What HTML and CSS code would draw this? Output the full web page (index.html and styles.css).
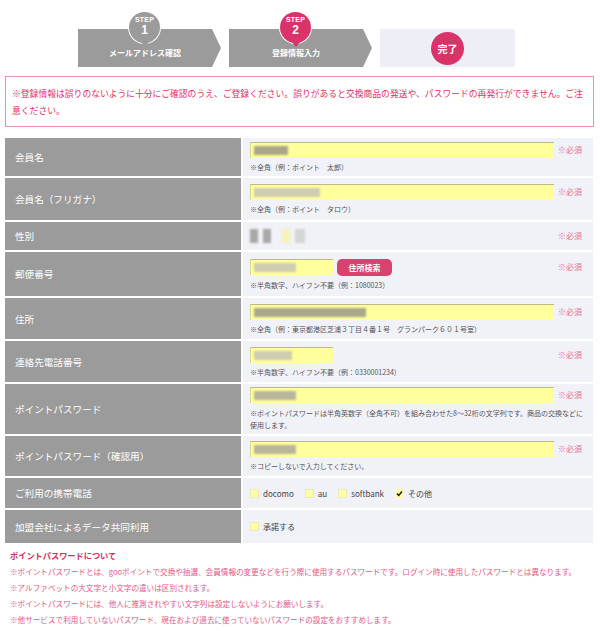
FILE: index.html
```html
<!DOCTYPE html>
<html lang="ja">
<head>
<meta charset="utf-8">
<title>登録情報入力</title>
<link rel="stylesheet" href="styles.css">
</head>
<body>
<div class="page">
  <div class="steps">
    <div class="step">
      <div class="bar">
        <div class="badge"><span class="b-step">STEP</span><span class="b-num">1</span></div>
        <span class="step-label">メールアドレス確認</span>
      </div>
      <div class="tip"></div>
    </div>
    <div class="step">
      <div class="bar">
        <div class="badge badge-pink"><span class="b-step">STEP</span><span class="b-num">2</span></div>
        <span class="step-label">登録情報入力</span>
      </div>
      <div class="tip"></div>
    </div>
    <div class="step-final">
      <span class="done-badge">完了</span>
    </div>
  </div>

  <div class="notice">※登録情報は誤りのないように十分にご確認のうえ、ご登録ください。誤りがあると交換商品の発送や、パスワードの再発行ができません。ご注意ください。</div>

  <div class="form">
    <div class="row h38">
      <div class="th">会員名</div>
      <div class="td">
        <div class="line"><div class="field wide"><span class="blur bl-dark w34"></span></div><span class="req">※必須</span></div>
        <p class="hint">※全角（例：ポイント　太郎）</p>
      </div>
    </div>
    <div class="row h42">
      <div class="th">会員名（フリガナ）</div>
      <div class="td">
        <div class="line"><div class="field wide"><span class="blur bl-light w66"></span></div><span class="req">※必須</span></div>
        <p class="hint">※全角（例：ポイント　タロウ）</p>
      </div>
    </div>
    <div class="row h28">
      <div class="th">性別</div>
      <div class="td">
        <div class="line">
          <div class="blobs"><span class="sq sq-grey"></span><span class="sq sq-grey"></span><span class="sq sq-yellow"></span><span class="sq sq-light"></span></div>
          <span class="req">※必須</span>
        </div>
      </div>
    </div>
    <div class="row h44">
      <div class="th">郵便番号</div>
      <div class="td">
        <div class="line"><div class="field short"><span class="blur bl-light w42"></span></div><span class="btn">住所検索</span><span class="req">※必須</span></div>
        <p class="hint">※半角数字、ハイフン不要（例：1080023）</p>
      </div>
    </div>
    <div class="row h41">
      <div class="th">住所</div>
      <div class="td">
        <div class="line"><div class="field wide"><span class="blur bl-dark w112"></span></div><span class="req">※必須</span></div>
        <p class="hint">※全角（例：東京都港区芝浦３丁目４番１号　グランパーク６０１号室）</p>
      </div>
    </div>
    <div class="row h41">
      <div class="th">連絡先電話番号</div>
      <div class="td">
        <div class="line"><div class="field short"><span class="blur bl-light w38"></span></div><span class="req">※必須</span></div>
        <p class="hint">※半角数字、ハイフン不要（例：0330001234）</p>
      </div>
    </div>
    <div class="row h50">
      <div class="th">ポイントパスワード</div>
      <div class="td">
        <div class="line"><div class="field wide"><span class="blur bl-mid w42"></span></div><span class="req">※必須</span></div>
        <p class="hint hint-wrap">※ポイントパスワードは半角英数字（全角不可）を組み合わせた8～32桁の文字列です。商品の交換などに使用します。</p>
      </div>
    </div>
    <div class="row h40">
      <div class="th">ポイントパスワード（確認用）</div>
      <div class="td">
        <div class="line"><div class="field wide"><span class="blur bl-mid w42"></span></div><span class="req">※必須</span></div>
        <p class="hint">※コピーしないで入力してください。</p>
      </div>
    </div>
    <div class="row h30">
      <div class="th">ご利用の携帯電話</div>
      <div class="td">
        <div class="checks">
          <span class="opt"><span class="cb"></span>docomo</span>
          <span class="opt"><span class="cb"></span>au</span>
          <span class="opt"><span class="cb"></span>softbank</span>
          <span class="opt"><span class="cb cb-on"><svg viewBox="0 0 9 9" width="9" height="9"><polyline points="2,4.6 3.8,6.4 7,2.6" fill="none" stroke="#222" stroke-width="1.6"/></svg></span>その他</span>
        </div>
      </div>
    </div>
    <div class="row h33">
      <div class="th">加盟会社によるデータ共同利用</div>
      <div class="td">
        <div class="checks">
          <span class="opt"><span class="cb"></span>承諾する</span>
        </div>
      </div>
    </div>
  </div>

  <div class="about">
    <h2 class="about-title">ポイントパスワードについて</h2>
    <p>※ポイントパスワードとは、gooポイントで交換や抽選、会員情報の変更などを行う際に使用するパスワードです。ログイン時に使用したパスワードとは異なります。</p>
    <p>※アルファベットの大文字と小文字の違いは区別されます。</p>
    <p>※ポイントパスワードには、他人に推測されやすい文字列は設定しないようにお願いします。</p>
    <p>※他サービスで利用していないパスワード、現在および過去に使っていないパスワードの設定をおすすめします。</p>
  </div>
</div>
</body>
</html>
```

FILE: styles.css
```css
* { box-sizing: border-box; }
html, body { margin: 0; padding: 0; background: #fff; }
body {
  font-family: "Noto Sans CJK JP", "Noto Sans", sans-serif;
  color: #333;
}
.page {
  width: 600px;
  padding: 0 6px 0 5px;
}

/* steps */
.steps {
  display: flex;
  gap: 8px;
  padding: 29px 0 0 73px;
}
.step { display: flex; }
.bar {
  position: relative;
  width: 134px;
  height: 38px;
  background: #9b9b9b;
  display: flex;
  align-items: flex-end;
  justify-content: center;
  padding-bottom: 9px;
}
.tip {
  width: 0;
  height: 0;
  border-left: 9px solid #9b9b9b;
  border-top: 19px solid transparent;
  border-bottom: 19px solid transparent;
}
.step-label {
  color: #fff;
  font-size: 8px;
  font-weight: bold;
  line-height: 10px;
  white-space: nowrap;
}
.badge {
  position: absolute;
  top: -17px;
  left: 51px;
  width: 31px;
  height: 31px;
  border-radius: 50%;
  background: #9b9b9b;
  box-shadow: 0 0 0 1px #fff;
  display: flex;
  flex-direction: column;
  align-items: center;
  padding-top: 4px;
  color: #fff;
  font-family: "Liberation Sans", "DejaVu Sans", sans-serif;
  font-weight: bold;
}
.badge::after {
  content: "";
  position: absolute;
  left: 50%;
  bottom: -4px;
  margin-left: -4px;
  border-left: 4px solid transparent;
  border-right: 4px solid transparent;
  border-top: 5px solid #9b9b9b;
}
.badge-pink { background: #d9336a; }
.badge-pink::after { border-top-color: #d9336a; }
.b-step { font-size: 7px; line-height: 8px; letter-spacing: 0.2px; }
.b-num { font-size: 12px; line-height: 12px; }
.step-final {
  width: 135px;
  height: 38px;
  background: #eeeef7;
  display: flex;
  align-items: center;
  justify-content: center;
}
.done-badge {
  width: 33px;
  height: 33px;
  border-radius: 50%;
  background: #d9336a;
  color: #fff;
  font-size: 10px;
  font-weight: bold;
  display: flex;
  align-items: center;
  justify-content: center;
}

/* notice */
.notice {
  margin-top: 9px;
  border: 1px solid #e892aa;
  padding: 8px 6px 7px;
  font-size: 8.8px;
  line-height: 17px;
  color: #e0306a;
}

/* form */
.form {
  margin-top: 11px;
  width: 588px;
}
.row {
  display: flex;
  margin-bottom: 2px;
}
.h38 { height: 38px; }
.h42 { height: 42px; }
.h28 { height: 28px; }
.h44 { height: 44px; }
.h41 { height: 41px; }
.h50 { height: 50px; }
.h40 { height: 40px; }
.h30 { height: 30px; }
.h33 { height: 33px; }
.th {
  width: 236px;
  flex: none;
  background: #9b9b9b;
  color: #fff;
  font-size: 9.6px;
  padding-left: 10px;
  display: flex;
  align-items: center;
}
.td {
  flex: 1;
  margin-left: 2px;
  background: #f1f1f8;
  padding: 0 5px 0 7px;
  display: flex;
  flex-direction: column;
  justify-content: center;
}
.line {
  display: flex;
  align-items: center;
}
.field {
  height: 16px;
  background: #ffff9c;
  border-top: 1px solid #b9b98a;
  border-left: 1px solid #d8d890;
  display: flex;
  align-items: center;
  padding-left: 3px;
}
.wide { width: 304px; }
.short { width: 83px; }
.blur {
  display: block;
  height: 9px;
  filter: blur(1.2px);
}
.bl-dark { background: #a9a68a; }
.bl-mid { background: #b8b59a; }
.bl-light { background: #cfccb0; }
.w34 { width: 34px; }
.w38 { width: 38px; }
.w42 { width: 42px; }
.w66 { width: 66px; }
.w112 { width: 112px; }
.blobs {
  display: flex;
  gap: 5px;
  height: 15px;
  align-items: center;
}
.sq {
  display: block;
  width: 8px;
  height: 14px;
  filter: blur(1px);
}
.sq-grey { background: #a8a8a8; }
.sq-yellow { background: #f3f3b8; margin-left: 6px; }
.sq-light { background: #d6d6d6; width: 10px; }
.btn {
  margin-left: 4px;
  width: 55px;
  height: 17px;
  border-radius: 5px;
  background: #d9426f;
  color: #fff;
  font-size: 8px;
  font-weight: bold;
  display: flex;
  align-items: center;
  justify-content: center;
}
.req {
  margin-left: auto;
  margin-right: 6px;
  font-size: 8px;
  line-height: 10px;
  color: #e3708f;
}
.hint {
  margin: 4px 0 0;
  font-size: 7px;
  line-height: 10px;
  color: #555;
}
.hint-wrap { line-height: 12px; }
.checks {
  display: flex;
  align-items: center;
  gap: 11px;
  font-size: 8px;
  color: #444;
}
.opt {
  display: flex;
  align-items: center;
  gap: 4px;
}
.cb {
  width: 9px;
  height: 9px;
  background: #ffffa6;
  border: 1px solid #ebebb6;
  display: block;
}
.cb-on { border: 0; }
.cb svg { display: block; }

/* about */
.about {
  margin-top: 4px;
  padding-left: 5px;
}
.about-title {
  margin: 0;
  font-size: 8.2px;
  line-height: 17px;
  font-weight: bold;
  color: #d42b63;
}
.about p {
  margin: 0;
  font-size: 7.6px;
  line-height: 16px;
  color: #e45686;
}
```
